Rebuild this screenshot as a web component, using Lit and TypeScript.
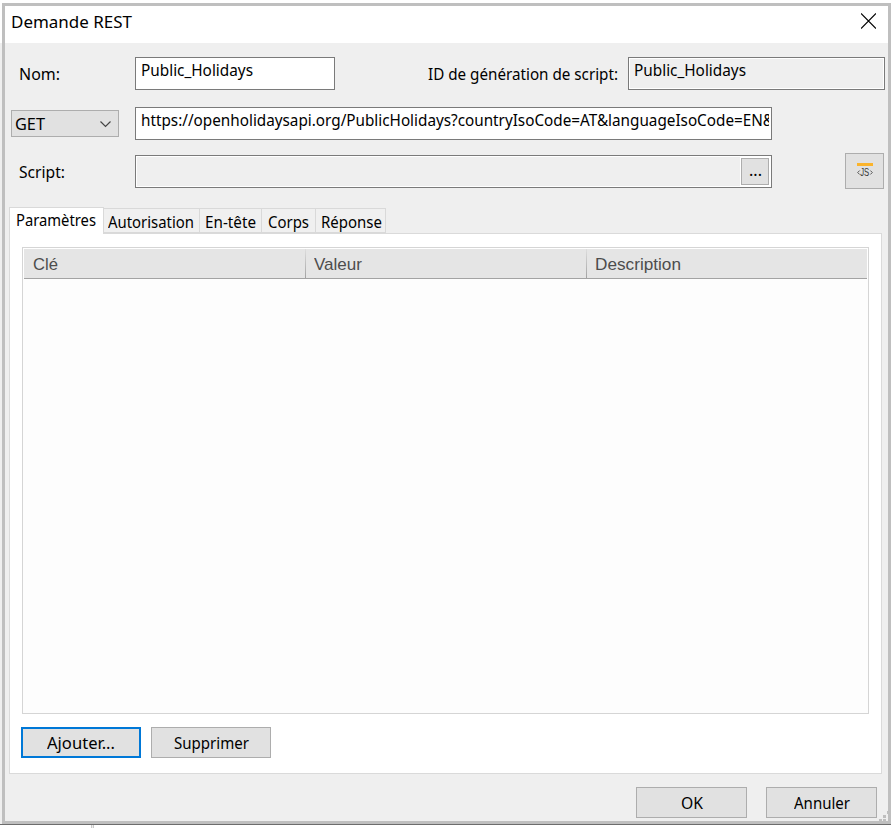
import { LitElement, html, css } from "lit";
import { customElement, property } from "lit/decorators.js";

/** A label whose glyphs are condensed or widened to a given width. */
@customElement("fit-text")
class FitText extends LitElement {
  @property({ type: String }) text = "";
  @property({ type: Number }) w = 50;
  static styles = css`
    :host { display: block; flex: none; white-space: pre; line-height: 24px; height: 24px; }
    .glyphs { display: inline-block; transform-origin: 0 50%; }
  `;
  render() {
    return html`<span class="glyphs">${this.text}</span>`;
  }
  updated() {
    const el = this.renderRoot.querySelector(".glyphs") as HTMLElement;
    this.style.width = `${this.w}px`;
    el.style.transform = "none";
    const natural = el.getBoundingClientRect().width;
    if (natural > 0) el.style.transform = `scaleX(${this.w / natural})`;
  }
}

const t = (text: string, w: number) => html`<fit-text .text=${text} .w=${w}></fit-text>`;

@customElement("app-root")
class AppRoot extends LitElement {
  static styles = css`
    * { box-sizing: border-box; }
    :host {
      display: flex; flex-direction: column; width: 891px; height: 828px; overflow: hidden;
      background: linear-gradient(#fff 43px, #efefef 43px);
      font: 17px "Noto Sans", sans-serif; color: #000;
    }
    .window {
      flex: none; display: flex; flex-direction: column; margin: 3px 0 0 2px; height: 821px;
      border: 3px solid #bfbfbf; background: #efefef; position: relative;
    }
    .title {
      height: 37px; flex: none; background: #fff; display: flex; justify-content: space-between;
      padding: 4px 12px 0 6px;
    }
    .title svg { margin-top: 3px; }
    .row { display: flex; flex: none; }
    .r1 { height: 33px; margin-top: 14px; padding-left: 14px; }
    .r2 { height: 33px; margin-top: 17px; padding-left: 6px; }
    .r3 { height: 36px; margin-top: 13px; padding-left: 14px; }
    .label { padding-top: 5px; }
    .c1 { width: 116px; }
    .c2 { margin-left: 92px; width: 201px; padding-left: 1px; }
    .field {
      height: 33px; border: 1px solid #7a7a7a; background: #fff; padding: 0 1px 0 5px;
      overflow: hidden; display: flex;
    }
    .ro { background: #efefef; border: 1px solid #7a7a7a; box-shadow: inset 0 0 0 1px #fff; }
    .name { width: 200px; }
    .id { width: 257px; }
    .url { width: 637px; padding-right: 0; }
    .clip { overflow: hidden; width: 628px; }
    .script { width: 637px; margin-top: 2px; justify-content: flex-end; padding: 1px 1px 1px 0; }
    .browse-wrap { background: #fff; padding: 1px 1px 0 1px; height: 29px; }
    .browse fit-text { margin-top: -3px; }
    .r3 .label { padding-top: 7px; }
    .btn {
      background: #e1e1e1; border: 1px solid #adadad; display: flex; justify-content: center;
    }
    .browse { width: 28px; height: 27px; align-items: center; }
    .js { width: 39px; height: 36px; margin-left: 73px; align-items: center; }
    .combo { width: 108px; height: 27px; margin: 3px 16px 0 0; justify-content: space-between; padding: 1px 6px 0 3px; }
    .combo svg { margin-top: 6px; }
    .tabs { display: flex; flex: none; height: 26px; margin: 18px 0 0 4px; align-items: flex-end; z-index: 1; }
    .tab { height: 25px; border: 1px solid #d9d9d9; border-left: 0; background: #f0f0f0; padding: 1px 0 0 4px; overflow: hidden; }
    .tab.on { height: 27px; margin-bottom: -1px; background: #fff; border-left: 1px solid #d9d9d9; border-bottom: 0; width: 95px; padding: 0 0 0 6px; }
    .t2 { width: 96px; } .t3 { width: 62px; padding-left: 5px; } .t4 { width: 54px; padding-left: 6px; } .t5 { width: 70px; padding-left: 5px; }
    .panel {
      flex: none; margin: 0 0 0 4px; width: 873px; height: 541px; background: #fff; border: 1px solid #dadada;
      padding: 13px 12px 0;
    }
    .table { height: 467px; width: 847px; background: #fdfdfd; border: 1px solid #d5d5d5; }
    .head { display: flex; height: 31px; margin: 0 1px; border-top: 1px solid #fff; border-bottom: 1px solid #a3a3a3; background: #e5e5e5;
      font: 17px "Liberation Sans", sans-serif; color: #4d4d4d; box-shadow: -1px 0 #fff, 1px 0 #fff; }
    .col { width: 281px; padding: 4px 0 0 9px; }
    .col + .col { border-left: 1px solid; border-image: linear-gradient(#e0e0e0, #a0a0a0) 1; padding-left: 8px; }
    .actions { display: flex; gap: 10px; margin: 13px 0 0 -1px; }
    .actions .btn { width: 120px; height: 31px; padding-top: 3px; }
    .actions .primary { border: 2px solid #0078d7; padding-top: 2px; }
    .footer { display: flex; gap: 19px; margin: 13px 0 0 631px; }
    .footer .btn { width: 111px; height: 31px; padding-top: 3px; }
    .grip { position: absolute; right: -3px; bottom: -1px; }
    .below { flex: none; height: 4px; border-top: 1px solid #6d6d6d; background: #fff; padding-left: 91px; }
    .tick { width: 3px; height: 3px; border: solid #c9c9c9; border-width: 0 1px; background: #eee; }
  `;

  render() {
    return html`
      <div class="window">
        <div class="title">
          ${t("Demande REST", 121)}
          <svg width="15" height="16" viewBox="0 0 15 16"><path d="M0 .5L15 15.5M15 .5L0 15.5" stroke="#000" stroke-width="1.2"/></svg>
        </div>
        <div class="row r1">
          <div class="label c1">${t("Nom:", 41)}</div>
          <div class="field name">${t("Public_Holidays", 112)}</div>
          <div class="label c2">${t("ID de génération de script:", 190)}</div>
          <div class="field ro id">${t("Public_Holidays", 112)}</div>
        </div>
        <div class="row r2">
          <div class="btn combo">${t("GET", 30)}
            <svg width="13" height="13" viewBox="0 0 13 13"><path d="M1.5 3.5L6.5 8.5L11.5 3.5" fill="none" stroke="#444" stroke-width="1.2"/></svg>
          </div>
          <div class="field url"><div class="clip">${t("https://openholidaysapi.org/PublicHolidays?countryIsoCode=AT&languageIsoCode=EN&", 633)}</div></div>
        </div>
        <div class="row r3">
          <div class="label c1">${t("Script:", 46)}</div>
          <div class="field ro script"><div class="browse-wrap"><div class="btn browse">${t("...", 13)}</div></div></div>
          <div class="btn js">
            <svg width="18" height="20" viewBox="0 0 18 20">
              <rect x="1" y="2" width="16" height="3" fill="#fbb42c"/>
              <path d="M3.7 9.5L1.7 11.5L3.7 13.5M14.3 9.5L16.3 11.5L14.3 13.5" fill="none" stroke="#555" stroke-width="1"/>
              <text x="4.2" y="15" font-family="Liberation Sans" font-size="10.5" textLength="9" lengthAdjust="spacingAndGlyphs" fill="#333">JS</text>
            </svg>
          </div>
        </div>
        <div class="tabs">
          <div class="tab on">${t("Paramètres", 80)}</div>
          <div class="tab t2">${t("Autorisation", 86)}</div>
          <div class="tab t3">${t("En-tête", 51)}</div>
          <div class="tab t4">${t("Corps", 41)}</div>
          <div class="tab t5">${t("Réponse", 61)}</div>
        </div>
        <div class="panel">
          <div class="table">
            <div class="head">
              <div class="col">${t("Clé", 25)}</div>
              <div class="col">${t("Valeur", 48)}</div>
              <div class="col">${t("Description", 86)}</div>
            </div>
          </div>
          <div class="actions">
            <div class="btn primary">${t("Ajouter...", 68)}</div>
            <div class="btn">${t("Supprimer", 75)}</div>
          </div>
        </div>
        <div class="footer">
          <div class="btn">${t("OK", 22)}</div>
          <div class="btn">${t("Annuler", 56)}</div>
        </div>
        <svg class="grip" width="12" height="11" viewBox="0 0 12 11" shape-rendering="crispEdges" fill="#bfbfbf">
          <rect x="8" y="0" width="3" height="3"/><rect x="4" y="4" width="3" height="3"/><rect x="0" y="8" width="3" height="2"/><rect x="4" y="8" width="3" height="2"/>
        </svg>
      </div>
      <div class="below"><div class="tick"></div></div>
    `;
  }
}
